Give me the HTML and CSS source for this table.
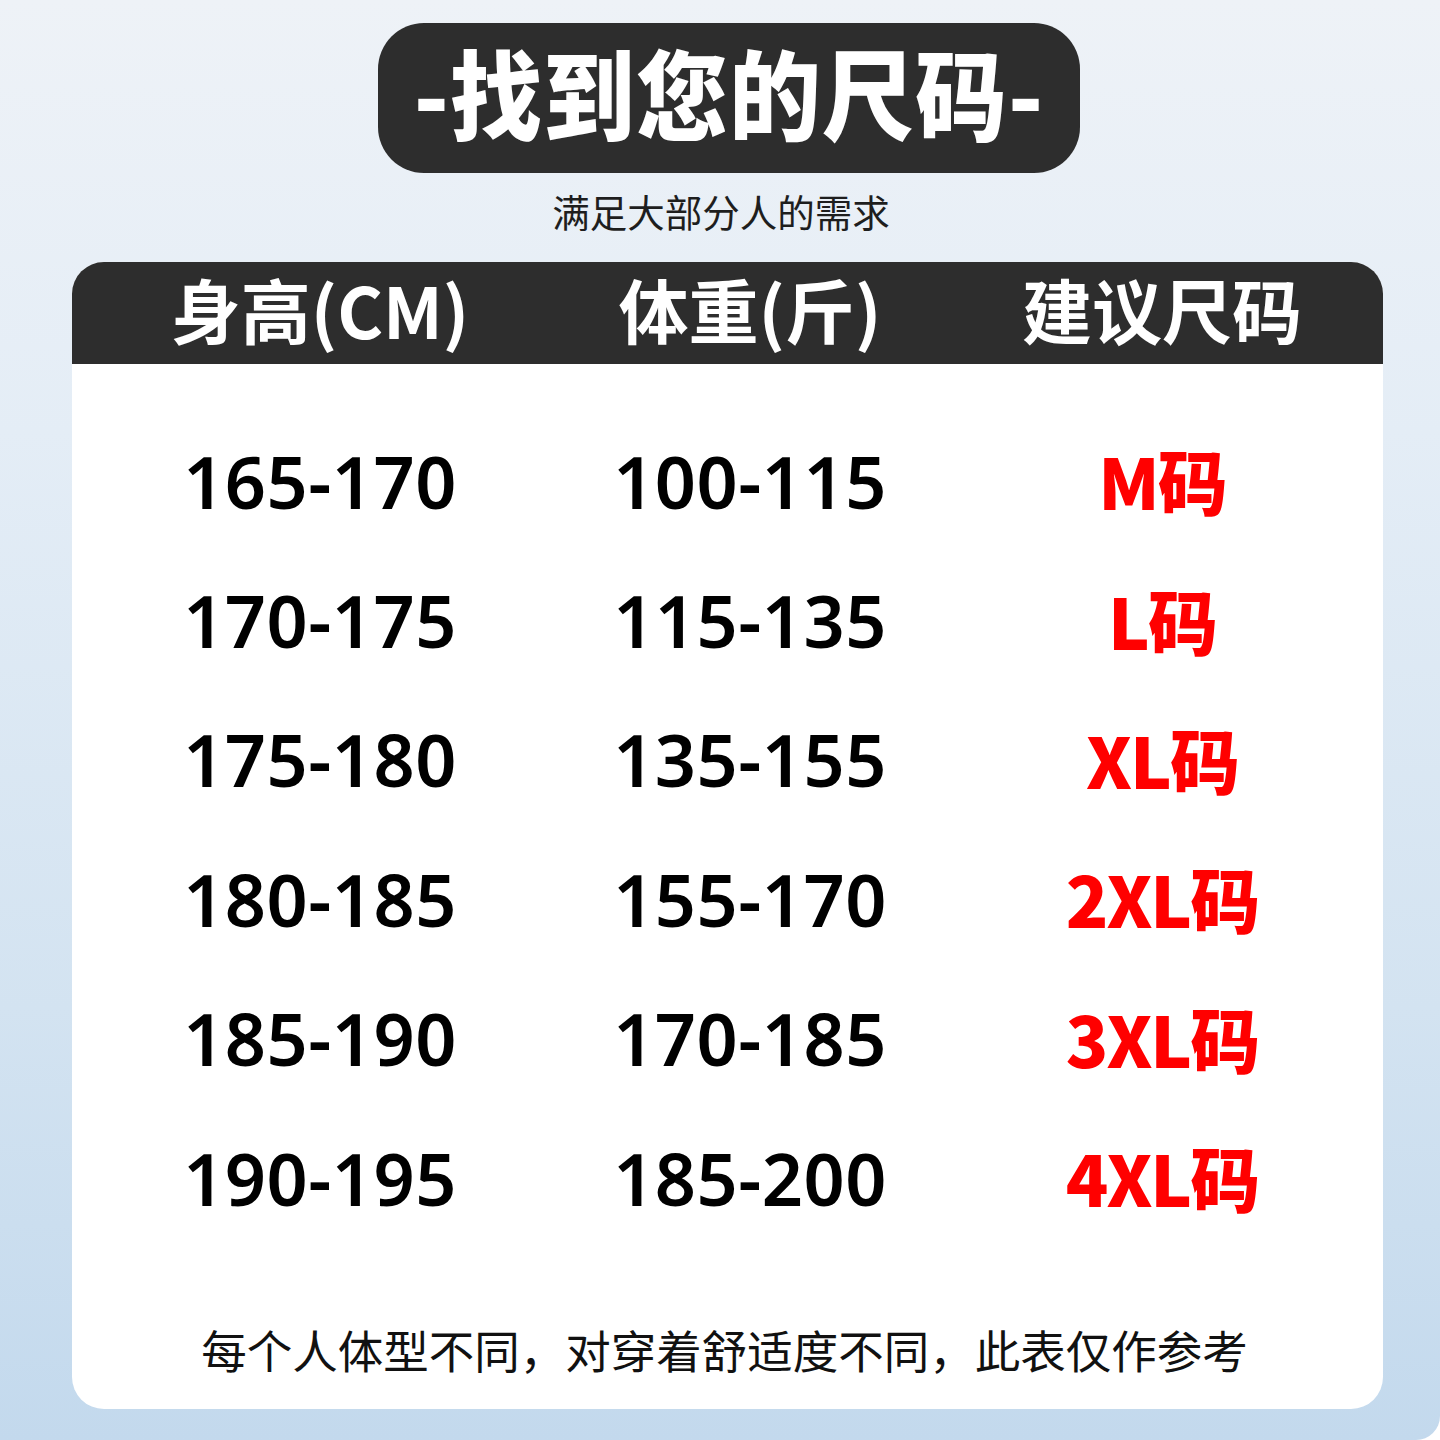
FILE: index.html
```html
<!DOCTYPE html>
<html lang="zh-CN">
<head>
<meta charset="utf-8">
<title>找到您的尺码</title>
<link rel="stylesheet" href="styles.css">
</head>
<body>
<div class="page">
  <div class="title-pill"><span class="title-text">-找到您的尺码-</span></div>
  <div class="subtitle">满足大部分人的需求</div>
  <div class="card">
    <div class="head">
      <div class="hcell">身高(CM)</div>
      <div class="hcell">体重(斤)</div>
      <div class="hcell">建议尺码</div>
    </div>
    <div class="rows">
      <div class="row"><div class="num">165-170</div><div class="num">100-115</div><div class="size">M码</div></div>
      <div class="row"><div class="num">170-175</div><div class="num">115-135</div><div class="size">L码</div></div>
      <div class="row"><div class="num">175-180</div><div class="num">135-155</div><div class="size">XL码</div></div>
      <div class="row"><div class="num">180-185</div><div class="num">155-170</div><div class="size">2XL码</div></div>
      <div class="row"><div class="num">185-190</div><div class="num">170-185</div><div class="size">3XL码</div></div>
      <div class="row"><div class="num">190-195</div><div class="num">185-200</div><div class="size">4XL码</div></div>
    </div>
    <div class="note">每个人体型不同，对穿着舒适度不同，此表仅作参考</div>
  </div>
</div>
</body>
</html>
```
FILE: styles.css
```css
html, body {
  margin: 0;
  padding: 0;
  background: #ffffff;
}
.page {
  width: 1440px;
  height: 1440px;
  overflow: hidden;
  border-radius: 0 0 24px 0;
  background: linear-gradient(180deg, #eef2f7 0%, #e4edf6 30%, #d3e3f1 70%, #c3d9ed 100%);
  font-family: "Noto Sans CJK SC", "Noto Sans", sans-serif;
  display: flex;
  flex-direction: column;
}
.title-pill {
  margin: 23px 0 0 378px;
  width: 702px;
  height: 150px;
  box-sizing: border-box;
  padding-bottom: 14px;
  border-radius: 46px;
  background: #2d2d2d;
  color: #ffffff;
  display: flex;
  align-items: center;
  justify-content: center;
}
.title-text {
  display: inline-block;
  font-size: 92px;
  font-weight: 900;
  line-height: 1.2;
  letter-spacing: 1px;
  transform: scaleY(1.06);
}
.subtitle {
  margin-top: 13px;
  text-align: center;
  font-size: 37.5px;
  line-height: 50px;
  color: #1e1e1e;
  padding-left: 2px;
}
.card {
  margin: 26px 0 0 72px;
  width: 1311px;
  height: 1147px;
  background: #ffffff;
  border-radius: 32px;
  display: flex;
  flex-direction: column;
}
.head {
  height: 102px;
  box-sizing: border-box;
  padding-bottom: 8px;
  background: #2d2d2d;
  border-radius: 32px 32px 0 0;
  display: grid;
  grid-template-columns: 440px 420px 404px;
  padding-left: 28px;
  align-items: center;
}
.hcell {
  color: #ffffff;
  font-size: 70px;
  font-weight: 700;
  text-align: center;
  line-height: 1.25;
}
.rows {
  padding-top: 47px;
  display: flex;
  flex-direction: column;
}
.row {
  height: 139.4px;
  display: grid;
  grid-template-columns: 440px 420px 404px;
  padding-left: 28px;
  align-items: center;
}
.num {
  font-family: "Noto Sans", sans-serif;
  font-weight: 600;
  font-size: 72px;
  color: #000000;
  text-align: center;
  letter-spacing: 0.5px;
}
.size {
  font-family: "Noto Sans CJK SC", "Noto Sans", sans-serif;
  font-weight: 900;
  font-size: 70px;
  color: #ff0000;
  text-align: center;
  letter-spacing: -2px;
  margin-top: -2px;
}
.note {
  margin-top: 72px;
  text-align: center;
  font-size: 45.5px;
  line-height: 60px;
  color: #111111;
  padding-right: 6px;
}
```
